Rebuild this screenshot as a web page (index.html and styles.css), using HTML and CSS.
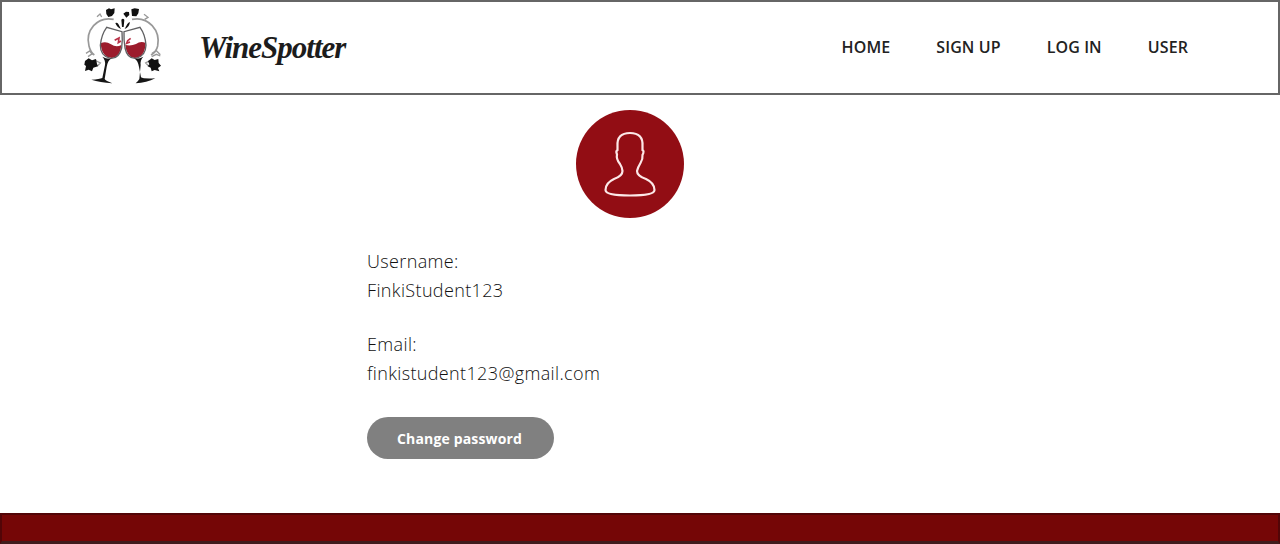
FILE: index.html
```html
<!DOCTYPE html>
<html lang="en">
<head>
<meta charset="utf-8">
<title>WineSpotter</title>
<link rel="stylesheet" href="styles.css">
</head>
<body>
<header class="header">
  <a class="brand">
    <svg class="logo" viewBox="0 0 285 294">
      <g fill="none" stroke="#999" stroke-width="5">
        <path d="M116 58C66 48 30 92 42 138C45 151 50 159 58 165"/>
        <path d="M171 58C221 48 257 92 248 138C245 151 239 159 228 165"/>
      </g>
      <g fill="none" stroke="#999" stroke-width="4">
        <path d="M33 160l11-7 9 11M39 170l13-9M66 50l9-8 5 9M207 43l12 9-10 6M231 160l13-8 12 12M230 170l14-7 12 5"/>
        <path d="M58 180l18 9-9 9M227 180l-15 9 9 9"/>
      </g>
      <g fill="#111">
        <path d="M30 183l11-8 10 6 12-4 3 15 3 7-14 4-4 11-10-5-11 4 3-15-5-4z"/>
        <path d="M219 184l11-9 9 5 11-3 1 12 7 8-9 7 4 10-14-4-9 4-3-11-9-4 5-6z"/>
        <path d="M93 30l9-5 6 3 11-3-1 14-7 9-11 3-6-9zM169 28l10-3 13 2-2 13-6 9-13-1zM145 41l8-6 9 1 1 9-9 8z"/>
        <path d="M139 59q5-6 9 0l-2 22h-5zM121 69q5-3 9 3l8 15q-12-4-17-18zM165 67q-4-1-8 5l-8 15q13-5 16-20z"/>
      </g>
      <path d="M77 130Q92 122 108 133Q124 144 139 135Q137 170 111 174Q80 173 77 130Z" fill="#9c1c2c"/>
      <path d="M212 129Q197 122 183 132Q168 139 151 135Q154 170 178 174Q210 173 212 129Z" fill="#9c1c2c"/>
      <path d="M119 121l13-7-2 14 8-5M167 115l-9 7-3 8 10-4" fill="none" stroke="#b93046" stroke-width="5"/>
      <g fill="none" stroke="#606062" stroke-width="4">
        <path d="M95 82Q79 104 76 136Q76 169 106 175Q132 177 140 144Q143 119 141 95Z"/>
        <path d="M195 82Q211 104 213 136Q212 169 183 175Q157 177 150 144Q146 119 147 95Z"/>
      </g>
      <g fill="#161616">
        <path d="M82 170Q95 178 108 176Q98 182 95 201L89 237Q92 242 112 250Q75 247 49 239Q74 238 82 234L90 195Q92 180 82 170Z"/>
        <path d="M205 170Q192 178 179 176Q189 182 192 201L198 232Q205 237 241 235Q215 248 182 250Q190 243 193 237L197 195Q195 180 205 170Z" />
      </g>
    </svg>
    <span class="brand-name">WineSpotter</span>
  </a>
  <nav class="nav">
    <a class="home">HOME</a><a class="signup">SIGN UP</a><a class="login">LOG IN</a><a class="user">USER</a>
  </nav>
</header>
<main class="profile">
  <svg class="avatar" viewBox="0 0 108 108">
    <circle cx="54" cy="54" r="54" fill="#920d14"/>
    <path d="M54 23C45 23 41 27.500 41.500 36V40Q39.500 41 41 44.500Q40 49 44 54Q46 57 46.500 61Q46.500 66 38 69Q29.500 73 29.500 80Q29.500 85.500 54 85.500Q78.500 85.500 78.500 80Q78.500 73 70 69Q61 66 61 61Q62 57 64.500 53Q67 49 66.500 45Q68.500 41 66.500 40V36C67 27.500 63 23 54 23Z" fill="none" stroke="#fce8e8" stroke-width="2.200"/>
  </svg>
  <section class="details">
    <div class="field"><div class="label">Username:</div><div class="username">FinkiStudent123</div></div>
    <div class="field"><div class="label mail-label">Email:</div><div class="email">finkistudent123@gmail.com</div></div>
    <button class="change">Change password</button>
  </section>
</main>
<footer class="footer"></footer>
</body>
</html>
```
FILE: styles.css
```css
* { box-sizing: border-box; }
body {
  margin: 0;
  height: 544px;
  display: flex;
  flex-direction: column;
  overflow: hidden;
  background: #fff;
  color: #222;
  font-family: "Open Sans", sans-serif;
}
.header {
  height: 95px;
  flex: none;
  display: flex;
  justify-content: space-between;
  align-items: center;
  padding: 0 90px 0 73px;
  border: 2px solid #666;
}
.brand { display: flex; align-items: center; }
.logo { width: 95px; height: 98px; margin: 3px 29px 0 0; }
.brand-name {
  font: italic 700 31px/40px "Liberation Serif", serif;
  letter-spacing: -1px;
  color: #1c1c1c;
}
.nav {
  display: flex;
  gap: 46px;
  margin-bottom: 2px;
  font-size: 16px;
  font-weight: 600;
  line-height: 24px;
  letter-spacing: 0.1px;
}
.profile { flex: 1; padding-top: 15px; }
.avatar { display: block; width: 108px; height: 108px; margin-left: 576px; }
.details { margin: 29px 0 0 367px; }
.field {
  height: 83px;
  font-size: 18px;
  font-weight: 300;
  line-height: 29px;
  letter-spacing: 0.36px;
  color: #111;
}
.change {
  display: block;
  width: 187px;
  height: 42px;
  margin-top: 4px;
  padding: 0 2px 0 0;
  border: 0;
  border-radius: 21px;
  background: #808080;
  color: #fff;
  font: 700 14px "Open Sans", sans-serif;
  letter-spacing: 0.15px;
}
.footer {
  height: 31px;
  flex: none;
  background: #750606;
  border: 2px solid #520507;
  border-bottom: 3px solid #401c1c;
}
```
